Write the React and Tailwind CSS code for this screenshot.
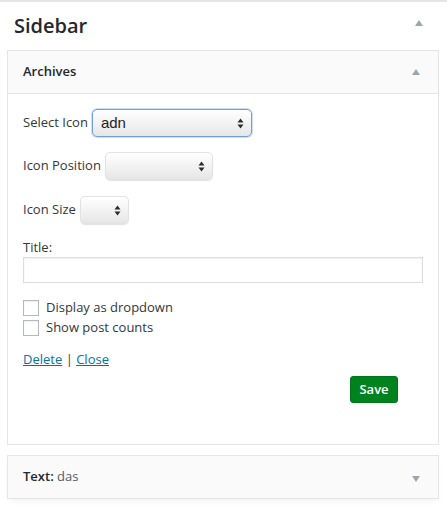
import React from 'react';

const font = { fontFamily: '"Open Sans", "Liberation Sans", sans-serif' };

const Arrows = () => (
  <svg width="7" height="11" viewBox="0 0 7 11" className="shrink-0">
    <path d="M3.5 0.5 L6.5 4.5 L0.5 4.5 Z" fill="#2b2b2b" />
    <path d="M3.5 10.5 L6.5 6.5 L0.5 6.5 Z" fill="#2b2b2b" />
  </svg>
);

const FakeSelect = ({ value, width, focused }) => (
  <div
    className={`h-[28px] ${width} flex items-center justify-between pl-[8px] pr-[7px] rounded-[5px] bg-gradient-to-b from-[#ffffff] via-[#f3f3f3] to-[#e6e6e6] ${
      focused
        ? 'border border-[#6fa0d8] shadow-[0_0_0_1px_rgba(120,160,215,0.35)]'
        : 'border border-[#e2e2e2] shadow-[0_1px_1px_rgba(0,0,0,0.12)]'
    }`}
  >
    <span className="text-[15px] text-[#222]" style={{ fontFamily: '"Liberation Sans", sans-serif' }}>
      {value}
    </span>
    <Arrows />
  </div>
);

const Tri = ({ down }) => (
  <svg width="8" height="6" viewBox="0 0 8 6">
    {down ? <path d="M0 0 L8 0 L4 6 Z" fill="#a0a5aa" /> : <path d="M4 0 L8 6 L0 6 Z" fill="#a0a5aa" />}
  </svg>
);

const Checkbox = ({ label }) => (
  <label className="flex items-center h-[20px]">
    <span className="w-[16px] h-[16px] border border-[#b4b9be] bg-white shadow-[inset_0_1px_2px_rgba(0,0,0,0.07)]" />
    <span className="ml-[7px] text-[13px] text-[#32373c]">{label}</span>
  </label>
);

export default function App() {
  return (
    <div className="w-[447px] h-[506px] bg-white overflow-hidden border-t-2 border-[#e6e6e6] text-[#23282d]" style={font}>
      {/* Sidebar header */}
      <div className="h-[48px] flex items-center justify-between pl-[14px] pr-[24px]">
        <h2 className="text-[20px] leading-[28px] font-semibold text-[#23282d] mt-[-1px]">Sidebar</h2>
        <span className="mb-[6px]"><Tri /></span>
      </div>

      {/* Archives widget */}
      <div className="ml-[7px] mr-[8px] border border-[#e5e5e5] bg-white">
        <div className="h-[43px] flex items-center justify-between pl-[15px] pr-[18px] bg-[#fafafa] border-b border-[#e5e5e5]">
          <h3 className="text-[13px] font-semibold text-[#23282d]">Archives</h3>
          <span className="mt-[-1px]"><Tri /></span>
        </div>
        <div className="px-[15px] pt-[15px] pb-[41px] text-[13px] text-[#32373c]">
          <div className="flex items-center gap-[4px]">
            <span>Select Icon</span>
            <FakeSelect value="adn" width="w-[160px]" focused />
          </div>
          <div className="flex items-center gap-[4px] mt-[15px]">
            <span>Icon Position</span>
            <FakeSelect value="" width="w-[108px]" />
          </div>
          <div className="flex items-center gap-[4px] mt-[16px]">
            <span>Icon Size</span>
            <FakeSelect value="" width="w-[49px]" />
          </div>
          <div className="mt-[14px] leading-[19px]">Title:</div>
          <div className="h-[26px] border border-[#dddddd] shadow-[inset_0_1px_2px_rgba(0,0,0,0.07)] bg-white" />
          <div className="mt-[15px] flex flex-col">
            <Checkbox label="Display as dropdown" />
            <Checkbox label="Show post counts" />
          </div>
          <div className="mt-[12px] leading-[18px]">
            <a href="#" className="text-[#0073aa] underline">Delete</a>
            <span className="text-[#32373c]"> | </span>
            <a href="#" className="text-[#0073aa] underline">Close</a>
          </div>
          <div className="flex justify-end pr-[25px] mt-[8px]">
            <button className="h-[27px] w-[48px] rounded-[3px] bg-[#00821f] border border-[#00761b] text-white text-[13px] font-semibold">
              Save
            </button>
          </div>
        </div>
      </div>

      {/* Text widget */}
      <div className="ml-[7px] mr-[8px] mt-[10px] border border-[#e5e5e5] bg-[#fafafa] shadow-[0_4px_6px_-2px_rgba(0,0,0,0.06)]">
        <div className="h-[42px] flex items-center justify-between pl-[15px] pr-[18px]">
          <h3 className="text-[13px] text-[#23282d]">
            <span className="font-semibold">Text:</span> <span className="text-[#555d66]">das</span>
          </h3>
          <span className="mt-[3px]"><Tri down /></span>
        </div>
      </div>
    </div>
  );
}
